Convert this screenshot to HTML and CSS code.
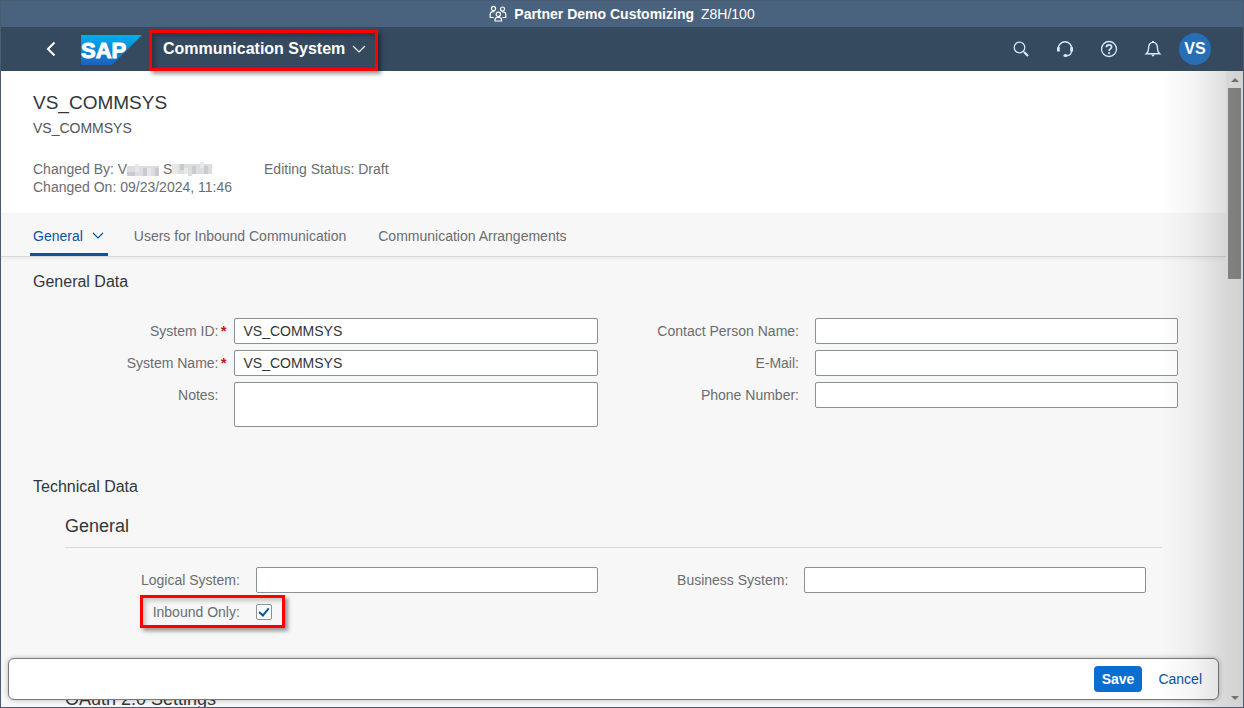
FILE: index.html
```html
<!DOCTYPE html>
<html lang="en">
<head>
<meta charset="utf-8">
<title>Communication System</title>
<link rel="stylesheet" href="styles.css">
</head>
<body>
<div class="app">
  <div class="env-bar">
    <svg class="env-icon" width="18" height="18" viewBox="0 0 18 18" fill="none" stroke="currentColor" stroke-width="1.2">
      <circle cx="4.500" cy="3.500" r="2.100"/><circle cx="13.500" cy="4" r="2"/><circle cx="9.300" cy="9.300" r="2.200"/>
      <path d="M4.800 12.500H1.200V9.500c0-1.800 1-2.900 2.800-2.900h1.400M13.500 12.500h3.300V9.700c0-1.700-1-2.800-2.700-2.800h-1.200M6 16v-1c0-1.700 1-2.500 2.300-2.500h2c1.500 0 2.300.8 2.300 2.500v1z"/>
    </svg>
    <strong>Partner Demo Customizing</strong>
    <span>Z8H/100</span>
  </div>

  <header class="shell">
    <button class="shell-btn back" aria-label="Back">
      <svg width="12" height="16" viewBox="0 0 12 16" fill="none" stroke="currentColor" stroke-width="2"><path d="M9.500 1.500 3 8l6.500 6.500"/></svg>
    </button>
    <a class="logo" href="#" aria-label="SAP home">
      <svg width="61" height="30" viewBox="0 0 61 30">
        <defs><linearGradient id="logo-fill" x1="0" y1="0" x2="0" y2="1"><stop offset="0" stop-color="#00aeef"/><stop offset="1" stop-color="#1d61bc"/></linearGradient></defs>
        <path d="M0 0h61L31 30H0z" fill="url(#logo-fill)"/>
        <text class="logo-text" x="0" y="23">SAP</text>
      </svg>
    </a>
    <button class="app-title">
      <span>Communication System</span>
      <svg width="14" height="8" viewBox="0 0 14 8" fill="none" stroke="currentColor" stroke-width="1.2"><path d="m1 1 6 6 6-6"/></svg>
    </button>
    <div class="shell-actions">
      <button class="shell-btn" aria-label="Search">
        <svg width="18" height="18" viewBox="0 0 18 18" fill="none" stroke="currentColor" stroke-width="1.300"><circle cx="7.500" cy="7.500" r="5.300"/><path d="m11.400 11.400 1.300 1.300"/><path d="m12.400 12.400 3.600 3.600" stroke-width="2.200"/></svg>
      </button>
      <button class="shell-btn" aria-label="Support">
        <svg width="18" height="18" viewBox="0 0 18 18" fill="none" stroke="currentColor" stroke-width="1.400"><path d="M2.300 8.500a6.700 6.700 0 0 1 13.400 0M15.600 11c-.3 3-2 4.600-5 4.700"/><path d="M2.400 7.300v4.200M15.600 7.300v4.200" stroke-width="2.800"/><ellipse cx="9.500" cy="15.500" rx="2.100" ry="1.600" fill="currentColor" stroke="none"/></svg>
      </button>
      <button class="shell-btn" aria-label="Help">
        <svg width="18" height="18" viewBox="0 0 18 18" fill="none" stroke="currentColor" stroke-width="1.300"><circle cx="9" cy="9" r="7.500"/><path d="M6.500 7.200C6.500 5.700 7.500 4.800 9 4.800s2.600.9 2.600 2.200c0 1.900-2.500 1.900-2.500 4" stroke-width="1.800"/><path d="M8.100 12.200h2v1.700h-2z" fill="currentColor" stroke="none"/></svg>
      </button>
      <button class="shell-btn" aria-label="Notifications">
        <svg width="18" height="18" viewBox="0 0 18 18" fill="none" stroke="currentColor" stroke-width="1.400"><path d="M2.300 13.800c1.700-1.300 2.200-2.600 2.200-5C4.500 5 5.800 2.400 9 2.400s4.500 2.600 4.500 6.400c0 2.400.5 3.700 2.200 5z"/><path d="M6.800 14.500h4.400L9 16.800z" fill="currentColor" stroke="none"/><path d="M9 1v1.500" stroke-width="2"/></svg>
      </button>
      <button class="avatar" aria-label="User menu">VS</button>
    </div>
  </header>

  <div class="viewport">
    <main class="page">
      <section class="object-header">
        <h1>VS_COMMSYS</h1>
        <p class="subtitle">VS_COMMSYS</p>
        <div class="facts">
          <div>
            <p class="fact">Changed By: V<svg class="redacted" width="32" height="12" viewBox="0 0 32 12"><path fill="#dcdddf" d="M0 2h32v10H0z"/><path fill="#c9cacd" d="M0 8h8v4H0zM16 4h4v8h-4zM28 4h4v8h-4z"/><path fill="#e8e8ea" d="M8 0h4v8H8zM20 4h4v8h-4z"/></svg> S<svg class="redacted" width="40" height="14" viewBox="0 0 40 14"><path fill="#dcdddf" d="M0 2h40v10H0zM16 12h4v2h-4z"/><path fill="#c9cacd" d="M8 2h4v6H8zM20 4h4v8h-4zM32 4h4v8h-4z"/><path fill="#e8e8e6" d="M0 2h6v10H0zM12 6h4v6h-4zM28 0h4v6h-4z"/></svg></p>
            <p class="fact">Changed On: 09/23/2024, 11:46</p>
          </div>
          <p class="fact">Editing Status: Draft</p>
        </div>
      </section>

      <nav class="tabs">
        <a class="tab tab-active" href="#general">General
          <svg width="12" height="8" viewBox="0 0 12 8" fill="none" stroke="currentColor" stroke-width="1.200"><path d="m1 1 5 5 5-5"/></svg>
        </a>
        <a class="tab" href="#users">Users for Inbound Communication</a>
        <a class="tab" href="#arrangements">Communication Arrangements</a>
      </nav>

      <section class="section section-general" id="general">
        <h2>General Data</h2>
        <div class="form">
          <div class="form-group">
            <div class="row"><label class="required" for="sys-id">System ID:<span class="star">*</span></label><input class="field" id="sys-id" type="text" value="VS_COMMSYS"></div>
            <div class="row"><label class="required" for="sys-name">System Name:<span class="star">*</span></label><input class="field" id="sys-name" type="text" value="VS_COMMSYS"></div>
            <div class="row"><label for="notes">Notes:</label><textarea class="field notes" id="notes"></textarea></div>
          </div>
          <div class="form-group">
            <div class="row"><label for="contact">Contact Person Name:</label><input class="field" id="contact" type="text"></div>
            <div class="row"><label for="email">E-Mail:</label><input class="field" id="email" type="email"></div>
            <div class="row"><label for="phone">Phone Number:</label><input class="field" id="phone" type="tel"></div>
          </div>
        </div>
      </section>

      <section class="section section-technical">
        <h2>Technical Data</h2>
        <div class="subsection">
          <h3>General</h3>
          <div class="form">
            <div class="form-group">
              <div class="row"><label for="logical">Logical System:</label><input class="field" id="logical" type="text"></div>
              <div class="row"><label class="marked" for="inbound">Inbound Only:</label><input class="check" id="inbound" type="checkbox" checked></div>
            </div>
            <div class="form-group">
              <div class="row"><label for="business">Business System:</label><input class="field" id="business" type="text"></div>
            </div>
          </div>
        </div>
        <div class="subsection subsection-oauth">
          <h3>OAuth 2.0 Settings</h3>
        </div>
      </section>
    </main>

    <div class="scrollbar">
      <svg width="8" height="4" viewBox="0 0 8 4"><path d="M4 0l4 4H0z" fill="#858585"/></svg>
      <div class="track"><div class="thumb"></div></div>
      <svg width="8" height="4" viewBox="0 0 8 4"><path d="M0 0h8L4 4z" fill="#858585"/></svg>
    </div>

    <footer class="actions">
      <button class="btn btn-primary">Save</button>
      <button class="btn">Cancel</button>
    </footer>
    <div class="edge-shade"></div>
  </div>
</div>
</body>
</html>
```

FILE: styles.css
```css
*, *::before, *::after { box-sizing: border-box; }

body {
  margin: 0;
  font-family: "Liberation Sans", Arial, sans-serif;
  font-size: 14px;
  color: #32363a;
}

h1, h2, h3, p { margin: 0; font-weight: 400; }

button { font: inherit; border: 0; background: none; padding: 0; cursor: pointer; }

.app {
  display: flex;
  flex-direction: column;
  height: 100vh;
  overflow: hidden;
  border: 1px solid #4a5d70;
}

.env-bar {
  display: flex;
  align-items: center;
  justify-content: center;
  gap: 7px;
  height: 26px;
  flex: none;
  background: #49637f;
  color: #fff;
}

.shell {
  display: flex;
  align-items: center;
  height: 44px;
  flex: none;
  padding: 0 32px;
  background: #354a5f;
  color: #fff;
  position: relative;
  z-index: 2;
}

.shell-btn {
  display: grid;
  place-items: center;
  width: 36px;
  height: 36px;
  color: #d1e8ff;
}

.back { color: #fff; }

.logo { display: flex; margin: 2px 0 0 12px; }

.logo-text {
  font-family: "Liberation Sans", Arial, sans-serif;
  font-weight: 700;
  font-size: 22px;
  fill: #fff;
  stroke: #fff;
}

.app-title {
  display: flex;
  align-items: center;
  gap: 7px;
  height: 41px;
  margin: 3px 0 0 7px;
  padding: 0 9px 3px 11px;
  border: 3px solid #f00;
  box-shadow: 3px 3px 4px #0006, inset 3px 3px 4px #0004;
  color: #fff;
  font-size: 16px;
  font-weight: 700;
}

.shell-actions { display: flex; align-items: center; gap: 8px; margin-left: auto; }

.avatar {
  width: 32px;
  height: 32px;
  border-radius: 50%;
  background: #286eb4;
  color: #fff;
  font-size: 16px;
  font-weight: 700;
}

.viewport {
  display: flex;
  flex: 1;
  min-height: 0;
  position: relative;
}

.page { flex: 1; overflow: hidden; background: #f7f7f7; }

.object-header { padding: 20px 32px 17px; background: #fff; }

.object-header h1 { font-size: 19px; line-height: 24px; }

.subtitle { margin-top: 4px; line-height: 18px; color: #515559; }

.facts { display: flex; gap: 32px; margin-top: 23px; color: #6a6d70; }

.fact { line-height: 18px; }

.redacted { vertical-align: bottom; margin-bottom: 2px; }

.tabs {
  display: flex;
  gap: 32px;
  height: 44px;
  padding: 0 32px;
  border-bottom: 1px solid #d9d9d9;
  box-shadow: 0 2px 4px #0000000d;
}

.tab {
  display: flex;
  align-items: center;
  padding-top: 6px;
  border-bottom: 3px solid transparent;
  color: #6a6d70;
  text-decoration: none;
  line-height: 18px;
}

.tab-active {
  gap: 9px;
  margin: 0 -6px 0 -3px;
  padding: 6px 4px 0 3px;
  border-color: #0854a0;
  color: #0854a0;
}

.section { padding: 0 32px; }

h2 { font-size: 16px; line-height: 20px; }

.section-general { padding-top: 15px; }

.section-technical { padding-top: 50px; }

.form { display: grid; grid-template-columns: 1fr 1fr; margin-top: 26px; }

.form-group { display: flex; flex-direction: column; gap: 6px; }

.row {
  display: grid;
  grid-template-columns: calc((100% + 16px) / 3) 1fr;
  column-gap: 8px;
  align-items: start;
  padding-right: 16px;
}

.row label { padding-right: 8px; text-align: right; line-height: 26px; color: #6a6d70; }

.row .required { padding-right: 0; }

.star { display: inline-block; width: 8px; color: #c11; font-weight: 700; text-align: right; }

.field {
  width: 100%;
  height: 26px;
  padding: 0 8px;
  border: 1px solid #89919a;
  border-radius: 2px;
  background: #fff;
  color: #32363a;
  font: inherit;
}

.notes { height: 45px; resize: none; }

.subsection { margin: 18px 32px 0; }

.subsection h3 { padding-bottom: 10px; border-bottom: 1px solid #d9d9d9; font-size: 18px; line-height: 22px; }

.subsection .form { margin-top: 19px; }

.subsection-oauth { margin-top: 63px; }

.check {
  appearance: none;
  width: 16px;
  height: 16px;
  margin: 5px 0;
  border: 1px solid #89919a;
  border-radius: 2px;
  background: #fff;
  display: grid;
  place-items: center;
}

.check:checked::after {
  content: "";
  width: 6px;
  height: 10px;
  margin-bottom: 2px;
  border: solid #0854a0;
  border-width: 0 2px 2px 0;
  transform: rotate(40deg);
}

.marked { position: relative; }

.marked::after {
  content: "";
  position: absolute;
  top: -4px;
  right: -37px;
  width: 145px;
  height: 33px;
  border: 3px solid #f00;
  box-shadow: 3px 3px 4px #0006, inset 3px 3px 4px #0003;
}

.scrollbar {
  display: flex;
  flex-direction: column;
  align-items: center;
  justify-content: space-between;
  width: 17px;
  padding: 7px 0;
  background: #f7f7f7;
}

.track { flex: 1; width: 13px; margin: 6px 0; }

.thumb { height: 191px; background: #949494; }

.actions {
  position: absolute;
  left: 7px;
  right: 24px;
  bottom: 7px;
  display: flex;
  align-items: center;
  justify-content: flex-end;
  height: 42px;
  padding: 0 8px;
  border: 1px solid #77797b;
  border-radius: 6px;
  background: #fff;
  box-shadow: 0 0 5px #0004;
}

.btn { height: 26px; padding: 0 8px; border-radius: 4px; color: #0854a0; }

.btn-primary { margin-right: 8px; background: #0a6ed1; color: #fff; font-weight: 700; }

.edge-shade {
  position: absolute;
  top: 0;
  right: 0;
  bottom: 0;
  width: 84px;
  pointer-events: none;
  background: linear-gradient(to right, #0000, #0000000a 40%, #00000021 80%, #00000026);
}
```
